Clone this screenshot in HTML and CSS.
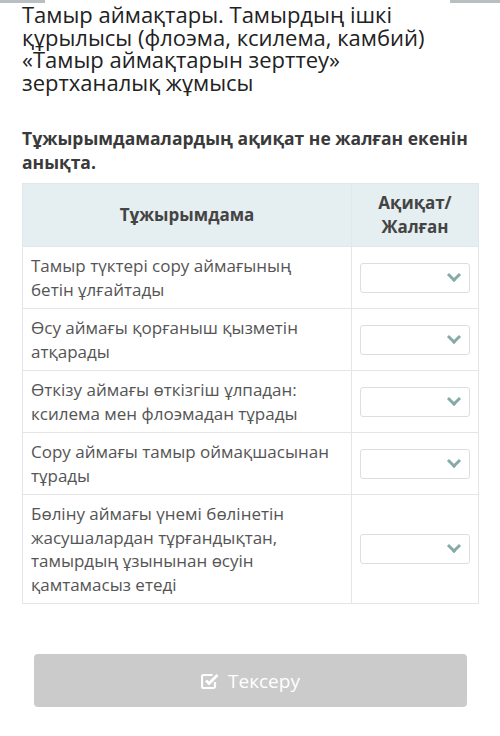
FILE: index.html
```html
<!DOCTYPE html>
<html lang="kk">
  <head>
    <meta charset="utf-8" />
    <meta name="viewport" content="width=device-width, initial-scale=1" />
    <title>Тамыр аймақтары</title>
    <link rel="stylesheet" href="styles.css">
  </head>
  <body>
    <div class="top-edge">
      <span class="edge-piece edge-left"></span>
      <span class="edge-piece edge-right"></span>
    </div>

    <div class="lesson">
      <h1 class="lesson-title">
        Тамыр аймақтары. Тамырдың ішкі құрылысы (флоэма, ксилема, камбий) «Тамыр аймақтарын зерттеу» зертханалық жұмысы
      </h1>

      <p class="task-title">Тұжырымдамалардың ақиқат не жалған екенін анықта.</p>

      <table class="task-table">
        <thead>
          <tr>
            <th class="col-text">Тұжырымдама</th>
            <th class="col-answer">Ақиқат/<br>Жалған</th>
          </tr>
        </thead>
        <tbody>
          <tr>
            <td>Тамыр түктері сору аймағының бетін ұлғайтады</td>
            <td class="answer-cell"><div class="select"><span class="chevron"></span></div></td>
          </tr>
          <tr>
            <td>Өсу аймағы қорғаныш қызметін атқарады</td>
            <td class="answer-cell"><div class="select"><span class="chevron"></span></div></td>
          </tr>
          <tr>
            <td>Өткізу аймағы өткізгіш ұлпадан: ксилема мен флоэмадан тұрады</td>
            <td class="answer-cell"><div class="select"><span class="chevron"></span></div></td>
          </tr>
          <tr>
            <td>Сору аймағы тамыр оймақшасынан тұрады</td>
            <td class="answer-cell"><div class="select"><span class="chevron"></span></div></td>
          </tr>
          <tr>
            <td>Бөліну аймағы үнемі бөлінетін жасушалардан тұрғандықтан, тамырдың ұзынынан өсуін қамтамасыз етеді</td>
            <td class="answer-cell"><div class="select"><span class="chevron"></span></div></td>
          </tr>
        </tbody>
      </table>

      <!--Check button-->
      <div class="actions">
        <button class="check-btn" type="button" disabled>
          <svg class="check-icon" xmlns="http://www.w3.org/2000/svg" width="18" height="18" viewBox="0 0 18 18">
            <path d="M14 10v4.5a1.5 1.5 0 0 1-1.5 1.5h-10A1.5 1.5 0 0 1 1 14.5v-10A1.5 1.5 0 0 1 2.5 3h9" fill="none" stroke="#fff" stroke-width="2.2"></path>
            <path d="M5 8.5l3 3 8.5-8.5" fill="none" stroke="#fff" stroke-width="2.8"></path>
          </svg>
          Тексеру
        </button>
      </div>
    </div>
  </body>
</html>
```

FILE: styles.css
```css
body {
  margin: 0;
  background: #fff;
  font-family: "Open Sans", "Noto Sans", sans-serif;
  color: #333;
}
.top-edge {
  display: flex;
  justify-content: space-between;
  height: 3px;
}
.edge-piece {
  background: #b9bfc1;
  height: 3px;
}
.edge-left {
  width: 45px;
}
.edge-right {
  width: 50px;
}
.lesson {
  padding: 0 21px 0 22px;
}
.lesson-title {
  margin: 0;
  max-width: 430px;
  font-size: 22px;
  line-height: 22.5px;
  font-weight: 400;
  color: #222;
}
.task-title {
  margin: 33px 0 0;
  font-size: 17.5px;
  line-height: 24px;
  font-weight: 700;
  color: #3a3a3a;
}
.task-table {
  margin-top: 9px;
  width: 457px;
  table-layout: fixed;
  border-collapse: collapse;
  font-size: 17px;
  line-height: 23.5px;
  color: #555;
}
.task-table th {
  background: #e5eef0;
  font-weight: 700;
  color: #444;
  height: 62px;
  padding: 0 8px;
  border: 1px solid #e1e7ea;
  text-align: center;
  line-height: 24px;
}
.col-text {
  width: 312px;
}
.task-table td {
  border: 1px solid #e3e6e8;
  padding: 7px 20px 7px 8px;
  vertical-align: middle;
}
.task-table td.answer-cell {
  padding: 0 8px;
}
.select {
  position: relative;
  height: 28px;
  border: 1px solid #dcdfe0;
  border-radius: 3px;
  background: #fff;
}
.chevron {
  position: absolute;
  right: 10px;
  top: 6px;
  width: 7px;
  height: 7px;
  border-right: 3px solid #86aaa8;
  border-bottom: 3px solid #86aaa8;
  transform: rotate(45deg);
}
.actions {
  padding: 50px 12px 0 12px;
}
.check-btn {
  display: flex;
  align-items: center;
  justify-content: center;
  gap: 9px;
  width: 100%;
  height: 53px;
  border: none;
  border-radius: 4px;
  background: #cbcbcb;
  color: #fff;
  font-family: "Open Sans", "Noto Sans", sans-serif;
  font-size: 19px;
}
.check-icon {
  display: block;
}
```
